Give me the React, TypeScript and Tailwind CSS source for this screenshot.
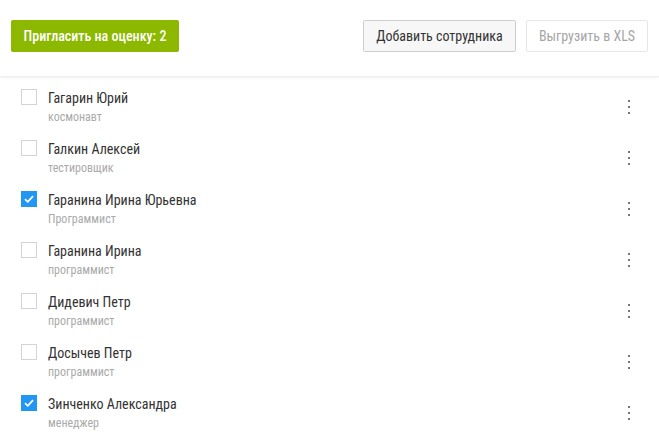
import React from "react";

const people = [
  { name: "Гагарин Юрий", role: "космонавт", checked: false },
  { name: "Галкин Алексей", role: "тестировщик", checked: false },
  { name: "Гаранина Ирина Юрьевна", role: "Программист", checked: true },
  { name: "Гаранина Ирина", role: "программист", checked: false },
  { name: "Дидевич Петр", role: "программист", checked: false },
  { name: "Досычев Петр", role: "программист", checked: false },
  { name: "Зинченко Александра", role: "менеджер", checked: true },
];

function Check({ checked }: { checked: boolean }) {
  if (checked) {
    return (
      <div className="w-4 h-4 bg-[#2196f3] flex items-center justify-center">
        <svg width="10" height="8" viewBox="0 0 10 8">
          <path d="M1 4.2 L3.8 6.8 L9 1.2" stroke="white" strokeWidth="1.8" fill="none" />
        </svg>
      </div>
    );
  }
  return <div className="w-4 h-4 border border-[#d0d4d8] bg-white" />;
}

export default function App() {
  return (
    <div className="w-[659px] h-[436px] overflow-hidden bg-white font-stretch-[87.5%]" style={{ fontFamily: "Roboto, 'Noto Sans', sans-serif" }}>
      <div className="h-[77px] flex items-start justify-between pl-[11px] pr-[11px] pt-[20px] shadow-[0_1px_2px_rgba(0,0,0,0.06)] border-b border-[#efefef]">
        <button className="h-[32px] w-[168px] bg-[#8cb800] rounded-[2px] text-white text-[14px] font-medium">
          Пригласить на оценку: 2
        </button>
        <div className="flex gap-[10px]">
          <button className="h-[32px] w-[153px] bg-[#f7f7f7] border border-[#cfcfcf] rounded-[2px] text-[#333] text-[14px]">
            Добавить сотрудника
          </button>
          <button className="h-[32px] w-[122px] bg-white border border-[#e6e6e6] rounded-[2px] text-[#a6a6a6] text-[14px]">
            Выгрузить в XLS
          </button>
        </div>
      </div>
      <div>
        {people.map((p, i) => (
          <div key={i} className="h-[51px] flex items-start pl-[21px] pt-[10px] pr-[29px]">
            <div className="mt-[2px]">
              <Check checked={p.checked} />
            </div>
            <div className="ml-[11px] mt-[1px] flex-1">
              <div className="text-[14px] leading-[20px] text-[#333]">{p.name}</div>
              <div className="text-[12px] leading-[18px] text-[#aaa]">{p.role}</div>
            </div>
            <div className="mt-[13px] flex flex-col gap-[4px]">
              <div className="w-[2px] h-[2px] bg-[#777]" />
              <div className="w-[2px] h-[2px] bg-[#777]" />
              <div className="w-[2px] h-[2px] bg-[#777]" />
            </div>
          </div>
        ))}
      </div>
    </div>
  );
}
